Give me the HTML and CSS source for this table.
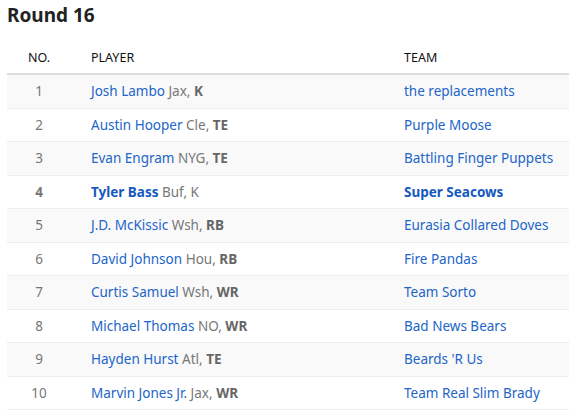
FILE: index.html
```html
<!DOCTYPE html>
<html>
<head>
<meta charset="utf-8">
<link rel="stylesheet" href="styles.css">
</head>
<body>
<h2 class="title">Round 16</h2>
<table class="picks">
  <thead>
    <tr><th class="c-no">NO.</th><th class="c-player">PLAYER</th><th class="c-team">TEAM</th></tr>
  </thead>
  <tbody>
    <tr><td class="c-no">1</td><td class="c-player"><a>Josh Lambo</a> <span class="meta">Jax, <b>K</b></span></td><td class="c-team"><a>the replacements</a></td></tr>
    <tr><td class="c-no">2</td><td class="c-player"><a>Austin Hooper</a> <span class="meta">Cle, <b>TE</b></span></td><td class="c-team"><a>Purple Moose</a></td></tr>
    <tr><td class="c-no">3</td><td class="c-player"><a>Evan Engram</a> <span class="meta">NYG, <b>TE</b></span></td><td class="c-team"><a>Battling Finger Puppets</a></td></tr>
    <tr class="mine"><td class="c-no">4</td><td class="c-player"><a>Tyler Bass</a> <span class="meta">Buf, K</span></td><td class="c-team"><a>Super Seacows</a></td></tr>
    <tr><td class="c-no">5</td><td class="c-player"><a>J.D. McKissic</a> <span class="meta">Wsh, <b>RB</b></span></td><td class="c-team"><a>Eurasia Collared Doves</a></td></tr>
    <tr><td class="c-no">6</td><td class="c-player"><a>David Johnson</a> <span class="meta">Hou, <b>RB</b></span></td><td class="c-team"><a>Fire Pandas</a></td></tr>
    <tr><td class="c-no">7</td><td class="c-player"><a>Curtis Samuel</a> <span class="meta">Wsh, <b>WR</b></span></td><td class="c-team"><a>Team Sorto</a></td></tr>
    <tr><td class="c-no">8</td><td class="c-player"><a>Michael Thomas</a> <span class="meta">NO, <b>WR</b></span></td><td class="c-team"><a>Bad News Bears</a></td></tr>
    <tr><td class="c-no">9</td><td class="c-player"><a>Hayden Hurst</a> <span class="meta">Atl, <b>TE</b></span></td><td class="c-team"><a>Beards 'R Us</a></td></tr>
    <tr><td class="c-no">10</td><td class="c-player"><a>Marvin Jones Jr.</a> <span class="meta">Jax, <b>WR</b></span></td><td class="c-team"><a>Team Real Slim Brady</a></td></tr>
  </tbody>
</table>
</body>
</html>
```
FILE: styles.css
```css
html, body {
  margin: 0;
  padding: 0;
  background: #fff;
}
body {
  padding: 0 0 0 7px;
  font-family: "Noto Sans", "Open Sans", sans-serif;
  font-size: 13.5px;
  color: #333;
}
.title {
  margin: 0;
  padding-top: 3px;
  height: 39px;
  font-size: 19px;
  font-weight: bold;
  color: #222;
  line-height: 24px;
}
.picks {
  width: 562px;
  border-collapse: collapse;
}
.picks th {
  text-align: left;
  font-weight: normal;
  font-size: 12.5px;
  color: #111;
  height: 31px;
  padding: 0;
  vertical-align: middle;
  border-bottom: 2px solid #ddd;
}
.picks td {
  height: 32.5px;
  padding: 0;
  border-bottom: 1px solid #eee;
  vertical-align: middle;
}
.picks tbody tr:nth-child(odd) td {
  background: #f9f9f9;
}
.picks .c-no {
  box-sizing: border-box;
  width: 84px;
  padding-right: 20px;
  text-align: center;
}
.picks td.c-no { color: #777; }
.c-player { width: 313px; }
a {
  color: #2265c8;
  text-decoration: none;
}
.meta { color: #777; }
.meta b { font-weight: bold; color: #666; }
.mine a, .mine .c-no { font-weight: bold; }
.mine .c-no { color: #555; }
.mine a { color: #1459c0; }
```
